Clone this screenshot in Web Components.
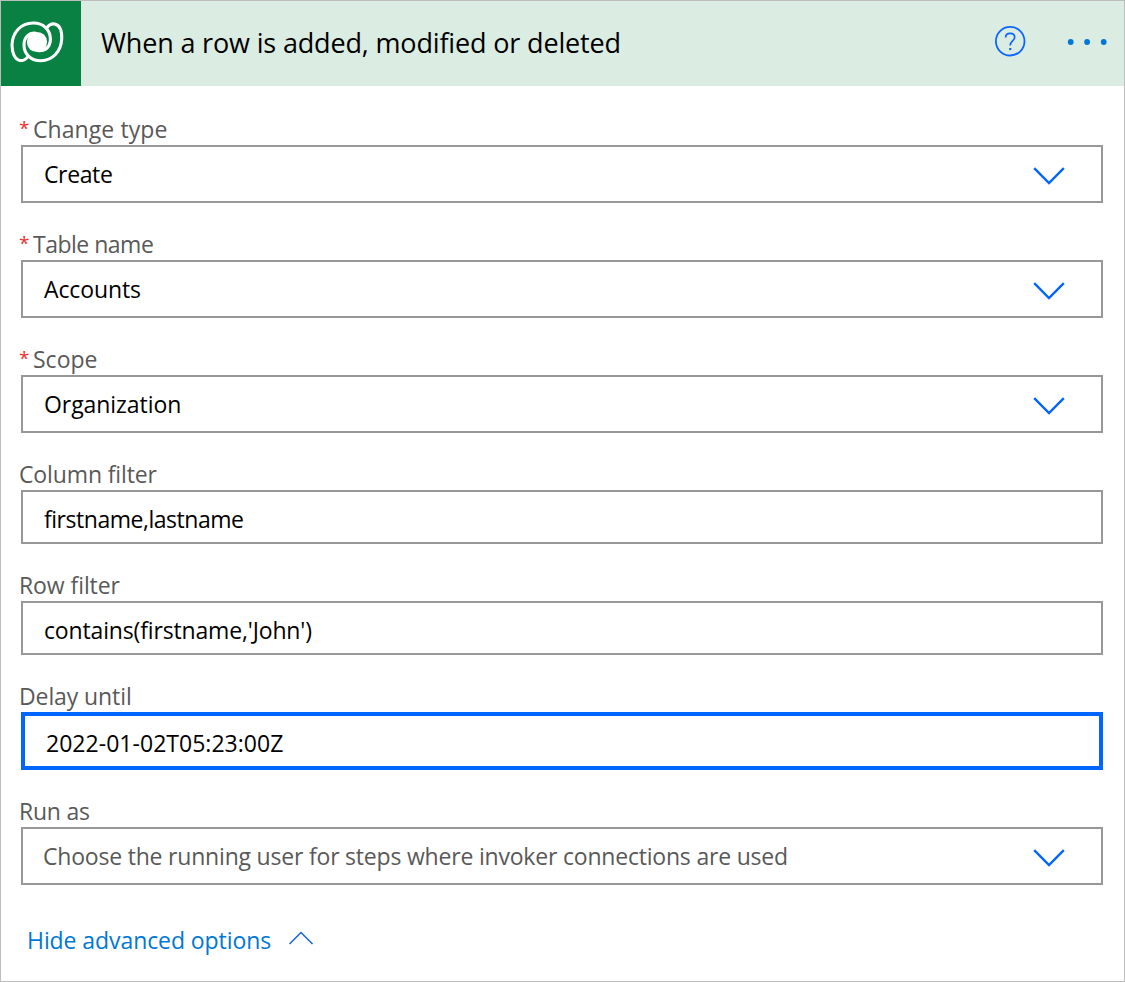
<!DOCTYPE html>
<html lang="en">
<head>
<meta charset="utf-8">
<title>When a row is added, modified or deleted</title>
<style>
html,body{margin:0;height:100%}
body{font-family:"Open Sans","Noto Sans",sans-serif;background:#fff;overflow:hidden}
</style>
</head>
<body>
<flow-card>
  <card-header slot="header" ls="-.16">When a row is added, modified or deleted</card-header>
  <form-field label="Change type" required ls=".08"><select-box ls="-.38">Create</select-box></form-field>
  <form-field label="Table name" required ls="-.5"><select-box ls="-.11">Accounts</select-box></form-field>
  <form-field label="Scope" required ls="0"><select-box ls="-.06">Organization</select-box></form-field>
  <form-field label="Column filter" ls="-.13"><text-box ls="-.47">firstname,lastname</text-box></form-field>
  <form-field label="Row filter" ls="-.08"><text-box ls="-.155">contains(firstname,'John')</text-box></form-field>
  <form-field label="Delay until" ls="-.1"><text-box active ls=".03">2022-01-02T05:23:00Z</text-box></form-field>
  <form-field label="Run as" ls="-.24"><select-box placeholder ls="-.2">Choose the running user for steps where invoker connections are used</select-box></form-field>
  <options-toggle slot="footer" ls="-.08">Hide advanced options</options-toggle>
</flow-card>
<script>
class Base extends HTMLElement {
  constructor() {
    super();
    this.attachShadow({ mode: 'open' }).innerHTML = this.constructor.markup;
  }
  connectedCallback() {
    if (this.hasAttribute('ls')) this.style.setProperty('--ls', this.getAttribute('ls') + 'px');
  }
}

customElements.define('flow-card', class extends Base {
  static markup = `
<style>
:host{display:flex;flex-direction:column;box-sizing:border-box;width:100%;height:982px;border:1px solid #bdbdbd;background:#fff}
.fields{display:flex;flex-direction:column;gap:30px;padding:32px 21px 0 20px}
</style>
<slot name="header"></slot>
<div class="fields"><slot></slot></div>
<slot name="footer"></slot>`;
});

customElements.define('card-header', class extends Base {
  static markup = `
<style>
:host{display:flex;height:85px;background:#dbece3;color:#000}
.logo{width:80px;height:85px;background:#088142;flex:none}
h1{flex:1;margin:0 0 0 20px;font-size:27px;font-weight:400;line-height:83px;letter-spacing:var(--ls,0px);white-space:nowrap}
svg{display:block;flex:none}
</style>
<div class="logo"><svg width="80" height="85" viewBox="1 1 80 85" fill="none" stroke="#fff" stroke-width="3.100" stroke-linejoin="round">
<circle cx="37" cy="42" r="10.100" fill="#fff" stroke="none"/>
<path d="M28 56.500C26 59.500 23.300 60.900 20 60.500C14.500 59.500 12 52.500 12 45C12.400 32 21 23.200 33 23C43.500 22.800 50.400 30 50.400 39C50.400 46.500 46 51.200 38 50.700"/>
<path d="M46.700 28C48.700 25 51.500 23.500 54.800 24C59.800 25.200 62 31 61.700 39C61.100 51.500 52.500 60.500 41 60.700C31 60.800 24 54 24 45C24 37.500 28.500 32.700 36 33.200"/>
</svg></div>
<h1><slot></slot></h1>
<svg width="130" height="85" viewBox="994 1 130 85">
<circle cx="1010.200" cy="41.200" r="14.300" fill="none" stroke="#0a66ff" stroke-width="1.800"/>
<path d="M1005.600 37.500C1005.600 35 1007.500 33.400 1010.200 33.400C1012.900 33.400 1014.700 35 1014.700 37.300C1014.700 41 1010.200 41 1010.200 45.400" fill="none" stroke="#0a66ff" stroke-width="1.700"/>
<rect x="1009.200" y="48" width="2.100" height="2.100" fill="#0a66ff"/>
<g fill="#0078d4"><circle cx="1070.700" cy="42" r="2.900"/><circle cx="1087.100" cy="42" r="2.900"/><circle cx="1103.700" cy="42" r="2.900"/></g>
</svg>`;
});

customElements.define('form-field', class extends Base {
  static markup = `
<style>
:host{display:block}
.label{display:flex;height:25px;margin:0 0 2px -2px;font-size:23px;line-height:23px;color:#595959;white-space:nowrap}
.label span{letter-spacing:var(--ls,0px)}
i{display:none;width:14px;font-style:normal;color:#f03030;font-size:19px;line-height:20px}
:host([required]) i{display:block}
</style>
<div class="label"><i>*</i><span></span></div>
<slot></slot>`;
  connectedCallback() {
    super.connectedCallback();
    this.shadowRoot.querySelector('span').textContent = this.getAttribute('label');
  }
});

customElements.define('select-box', class extends Base {
  static markup = `
<style>
:host{display:flex;justify-content:space-between;box-sizing:border-box;height:58px;border:2px solid #989898;padding:0 35px 0 21px;font-size:23px;line-height:54px;color:#000;white-space:nowrap}
:host([placeholder]){color:#595959;padding-left:20px}
span{letter-spacing:var(--ls,0px)}
svg{display:block;margin-top:17px}
</style>
<span><slot></slot></span>
<svg width="34" height="22" viewBox="0 0 34 22" fill="none" stroke="#0066ff" stroke-width="2.400"><path d="M2.200 4.200L17 19L31.800 4.200"/></svg>`;
});

customElements.define('text-box', class extends Base {
  static markup = `
<style>
:host{display:block;box-sizing:border-box;height:54px;border:2px solid #989898;padding:0 21px;font-size:23px;line-height:54px;color:#000;white-space:nowrap}
:host([active]){height:58px;border:4px solid #0066ff}
span{letter-spacing:var(--ls,0px)}
</style>
<span><slot></slot></span>`;
});

customElements.define('options-toggle', class extends Base {
  static markup = `
<style>
:host{display:flex;align-items:center;gap:17px;margin:37px 0 0 26px;height:36px;font-size:23px;line-height:36px;color:#0078d4;white-space:nowrap}
span{letter-spacing:var(--ls,0px)}
svg{display:block;margin-top:-4px}
</style>
<span><slot></slot></span>
<svg width="26" height="16" viewBox="0 0 26 16" fill="none" stroke="#1464e0" stroke-width="1.500"><path d="M1.500 14L13 2.500L24.500 14"/></svg>`;
});
</script>
</body>
</html>
